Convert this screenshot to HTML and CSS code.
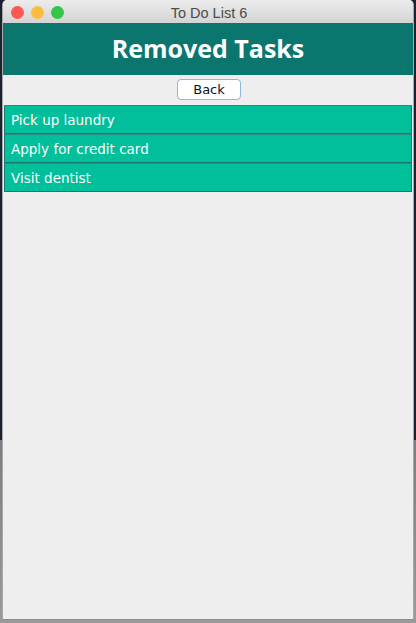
FILE: index.html
```html
<!DOCTYPE html>
<html>
<head>
<meta charset="utf-8">
<link rel="stylesheet" href="styles.css">
</head>
<body>
<div class="window">
  <div class="titlebar">
    <div class="lights">
      <span class="light red"></span>
      <span class="light yellow"></span>
      <span class="light green"></span>
    </div>
    <div class="title">To Do List 6</div>
  </div>
  <div class="header">Removed Tasks</div>
  <div class="content">
    <div class="btn-row"><button class="btn">Back</button></div>
    <ul class="list">
      <li class="item">Pick up laundry</li>
      <li class="item">Apply for credit card</li>
      <li class="item">Visit dentist</li>
    </ul>
  </div>
</div>
</body>
</html>
```

FILE: styles.css
```css
html, body {
  margin: 0;
  padding: 0;
}
body {
  width: 416px;
  height: 623px;
  background: linear-gradient(to bottom, #1b2230 0, #1b2230 440px, #7d7d7d 440px, #9a9a9a 623px);
  font-family: "DejaVu Sans", "Open Sans", sans-serif;
  overflow: hidden;
}
.window {
  margin-left: 2px;
  width: 412px;
  height: 620px;
  background: #eeeeee;
  border-radius: 5px 5px 0 0;
  border-left: 1px solid #a8a8a8;
  border-right: 1px solid #a8a8a8;
  border-bottom: 1px solid #8c8c8c;
  overflow: hidden;
  display: flex;
  flex-direction: column;
  box-sizing: border-box;
}
.titlebar {
  height: 23px;
  flex: none;
  background: linear-gradient(to bottom, #ececec, #d4d4d4);
  display: flex;
  align-items: center;
  justify-content: center;
  position: relative;
}
.lights {
  position: absolute;
  left: 8px;
  top: 6px;
  display: flex;
  gap: 7px;
}
.light {
  width: 13px;
  height: 13px;
  border-radius: 50%;
  display: block;
}
.red { background: #fc5753; }
.yellow { background: #fdbc40; }
.green { background: #33c748; }
.title {
  font-family: "Liberation Sans", "Open Sans", sans-serif;
  font-size: 14.5px;
  color: #4b4b4b;
  padding-top: 2px;
  padding-left: 2px;
}
.header {
  height: 52px;
  flex: none;
  background: #0b766d;
  color: #ffffff;
  font-family: "Open Sans", "Noto Sans", sans-serif;
  font-weight: 700;
  font-size: 25px;
  display: flex;
  align-items: center;
  justify-content: center;
  padding-bottom: 2px;
  box-sizing: border-box;
}
.content {
  flex: 1;
  padding: 4px 1px 0 1px;
}
.btn-row {
  display: flex;
  justify-content: center;
}
.btn {
  width: 64px;
  height: 21px;
  margin-left: 2px;
  padding: 0;
  background: #ffffff;
  border: 1px solid #8fb7e6;
  border-radius: 4px;
  font-family: "DejaVu Sans", sans-serif;
  font-size: 13px;
  color: #111111;
  line-height: 19px;
}
.list {
  list-style: none;
  margin: 5px 0 0 0;
  padding: 0;
}
.item {
  height: 29px;
  box-sizing: border-box;
  background: #00bf9a;
  border: 1px solid #177a6c;
  border-top-color: #2c8a7e;
  color: #ffffff;
  font-size: 13.5px;
  line-height: 27px;
  padding-top: 1px;
  padding-left: 6px;
}
```
